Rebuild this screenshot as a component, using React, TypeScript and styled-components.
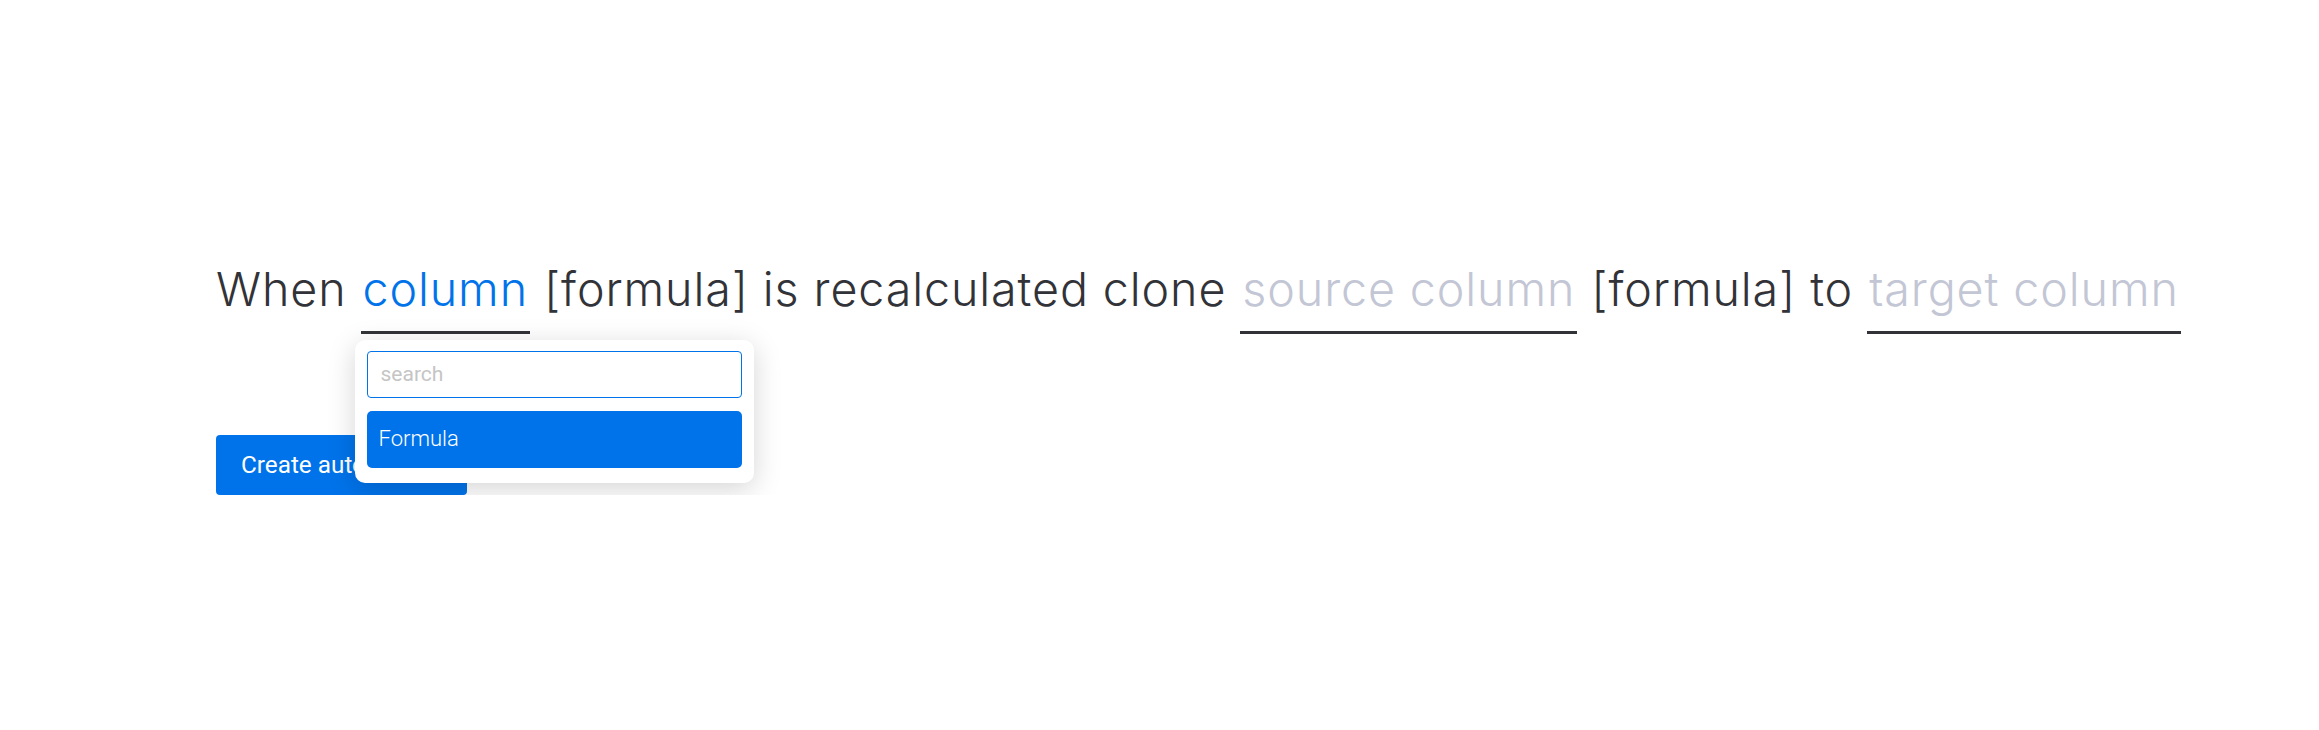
import React from 'react';
import styled, { createGlobalStyle } from 'styled-components';

const GlobalStyle = createGlobalStyle`
	body {
		margin: 0;
		background: #ffffff;
		font-family: Roboto, "Liberation Sans", sans-serif;
	}
`;

const Page = styled.main`
	max-width: 1887px;
	margin: 0 auto;
	padding-top: 262px;
`;

const Sentence = styled.p`
	margin: 0;
	font-family: Inter, "Liberation Sans", sans-serif;
	font-weight: 300;
	font-size: 46.6px;
	letter-spacing: 0.9px;
	line-height: 1.2;
	color: #323338;
	white-space: nowrap;
`;

const Field = styled.span<{ $filled?: boolean }>`
	position: relative;
	display: inline-block;
	padding: 0 2px 13px;
	border-bottom: 3px solid #323338;
	color: ${(p) => (p.$filled ? '#0073ea' : '#c3c6d4')};
	cursor: pointer;
`;

const Dropdown = styled.div`
	position: absolute;
	z-index: 10;
	top: calc(100% + 9px);
	left: -6px;
	width: 399px;
	box-sizing: border-box;
	padding: 11px 12px 15px;
	background: #ffffff;
	border-radius: 10px;
	box-shadow: 0 6px 28px rgba(0, 0, 0, 0.17);
	font-family: Roboto, "Liberation Sans", sans-serif;
	letter-spacing: normal;
`;

const Search = styled.input`
	display: block;
	width: 100%;
	height: 47px;
	box-sizing: border-box;
	padding: 0 13px;
	border: 1px solid #0073ea;
	border-radius: 4px;
	outline: none;
	font-family: inherit;
	font-size: 21px;
	color: #323338;

	&::placeholder {
		color: #c5c5c5;
	}
`;

const Option = styled.div<{ $selected?: boolean }>`
	display: flex;
	align-items: center;
	height: 57px;
	margin-top: 13px;
	padding: 0 12px;
	border-radius: 5px;
	background: ${(p) => (p.$selected ? '#0073ea' : 'transparent')};
	color: ${(p) => (p.$selected ? '#ffffff' : '#323338')};
	font-size: 22px;
`;

const Actions = styled.div`
	margin-top: 101px;
`;

const Button = styled.button`
	height: 60px;
	padding: 0 25px;
	border: none;
	border-radius: 4px;
	background: #0073ea;
	color: #ffffff;
	font-family: Roboto, "Liberation Sans", sans-serif;
	font-size: 24.3px;
	cursor: pointer;
`;

export default function App() {
	return (
		<>
			<GlobalStyle />
			<Page>
				<Sentence>
					When{' '}
					<Field $filled>
						column
						<Dropdown>
							<Search placeholder="search" />
							<Option $selected>Formula</Option>
						</Dropdown>
					</Field>{' '}
					[formula] is recalculated clone <Field>source column</Field> [formula] to{' '}
					<Field>target column</Field>
				</Sentence>
				<Actions>
					<Button>Create automation</Button>
				</Actions>
			</Page>
		</>
	);
}
